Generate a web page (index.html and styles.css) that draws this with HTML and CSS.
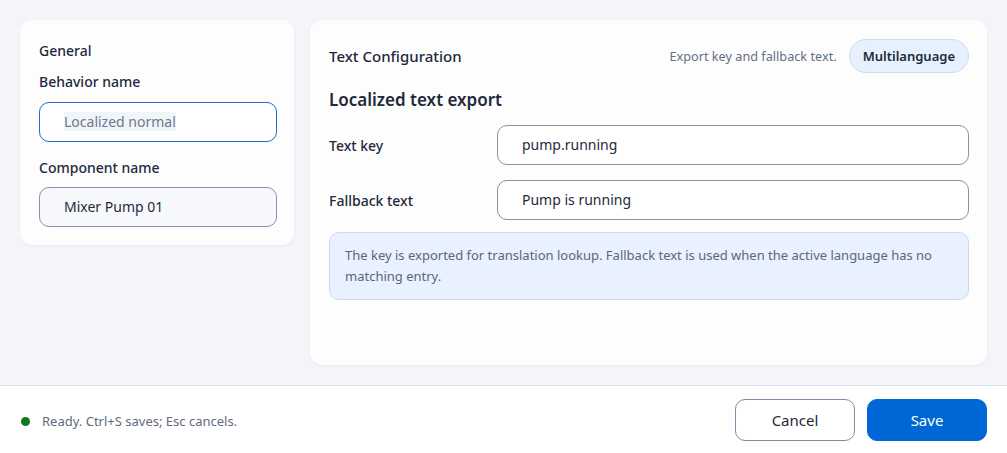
FILE: index.html
```html
<!doctype html>
<html>
<head>
    <meta charset="UTF-8">
    <title>Text Configuration</title>
    <link rel="stylesheet" href="styles.css">
</head>
<body>
    <div class="main">
        <div class="card side">
            <div class="side-title">General</div>
            <label class="side-label">Behavior name</label>
            <div class="input input-focus"><span class="ph">Localized normal</span></div>
            <label class="side-label">Component name</label>
            <div class="input input-soft">Mixer Pump 01</div>
        </div>

        <div class="card panel">
            <div class="panel-head">
                <div class="panel-title">Text Configuration</div>
                <div class="panel-meta">
                    <span class="hint">Export key and fallback text.</span>
                    <span class="pill">Multilanguage</span>
                </div>
            </div>
            <h2>Localized text export</h2>
            <div class="row">
                <label>Text key</label>
                <div class="input">pump.running</div>
            </div>
            <div class="row">
                <label>Fallback text</label>
                <div class="input">Pump is running</div>
            </div>
            <div class="info">The key is exported for translation lookup. Fallback text is used when the active language has no matching entry.</div>
        </div>
    </div>

    <div class="footer">
        <div class="status"><span class="dot"></span>Ready. Ctrl+S saves; Esc cancels.</div>
        <div class="actions">
            <button class="btn btn-cancel">Cancel</button>
            <button class="btn btn-save">Save</button>
        </div>
    </div>
</body>
</html>
```

FILE: styles.css
```css
* { margin: 0; padding: 0; box-sizing: border-box; }
html, body { height: 100%; }
body { background: #f3f5f9; font-family: "Noto Sans", "Open Sans", sans-serif; color: #1e2a3b; display: flex; flex-direction: column; }

.main { flex: 1; display: flex; gap: 16px; padding: 20px; align-items: flex-start; }
.card { background: #fdfdfe; border-radius: 12px; box-shadow: 0 1px 3px rgba(30,50,80,0.06); }

.side { width: 274px; padding: 21px 17px 18px 19px; display: flex; flex-direction: column; }
.side-title { font-size: 14px; font-weight: 500; line-height: 20px; margin-bottom: 11px; }
.side-label { font-size: 14px; font-weight: 500; line-height: 20px; margin-bottom: 10px; }
.side .input + .side-label { margin-top: 16px; margin-bottom: 9px; }

.input { height: 40px; border: 1px solid #8493a6; border-radius: 10px; padding: 0 24px; font-size: 14px; line-height: 38px; color: #1e2a3b; background: #fff; }
.input-focus { border-color: #1a6fd0; }
.input-focus .ph { color: #6c7a8e; background: #f1f4f9; }
.input-soft { background: #f6f8fc; }

.panel { flex: 1; align-self: stretch; padding: 19px 18px 19px 19px; }
.panel-head { display: flex; align-items: center; justify-content: space-between; height: 34px; }
.panel-title { font-size: 15px; font-weight: 500; }
.panel-meta { display: flex; align-items: center; gap: 12px; }
.hint { font-size: 12.7px; color: #637083; }
.pill { height: 34px; line-height: 32px; padding: 0 13px; border: 1px solid #cfdcee; border-radius: 17px; background: #e7f0fd; font-size: 13px; font-weight: 600; }

h2 { font-size: 17px; font-weight: 600; line-height: 24px; margin: 15px 0 13px; }

.row { display: grid; grid-template-columns: 168px 1fr; align-items: center; margin-bottom: 15px; }
.row label { font-size: 14px; font-weight: 500; }
.row + .row { margin-bottom: 12px; }

.info { background: #e8f1fd; border: 1px solid #cadbf0; border-radius: 10px; padding: 12px 15px; font-size: 13px; line-height: 21px; color: #5b6779; }

.footer { height: 68px; flex: none; background: #fff; border-top: 1px solid #d6dee9; display: flex; align-items: center; justify-content: space-between; padding: 0 20px 0 21px; }
.status { display: flex; align-items: center; font-size: 13px; color: #5f6b7d; padding-top: 3px; }
.dot { width: 9px; height: 9px; border-radius: 50%; background: #0e7a1c; margin-right: 12px; }
.actions { display: flex; gap: 12px; }
.btn { width: 120px; height: 42px; border-radius: 10px; font-family: inherit; font-size: 15px; cursor: pointer; }
.btn-cancel { background: #fff; border: 1px solid #7f8ea2; color: #1e2a3b; }
.btn-save { background: #0067d6; border: 1px solid #0067d6; color: #fff; }
```
